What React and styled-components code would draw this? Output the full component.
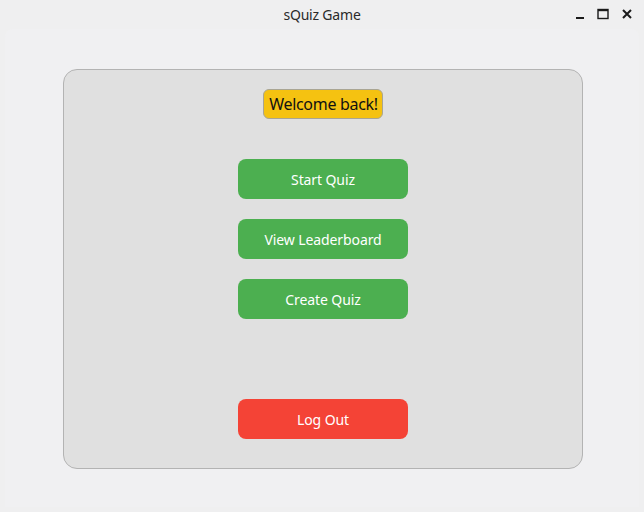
import React from "react";
import styled, { createGlobalStyle } from "styled-components";

const Global = createGlobalStyle`
  html, body { margin: 0; padding: 0; background: #efeff0; }
  body { font-family: "Noto Sans", "Open Sans", sans-serif; }
`;

const Window = styled.div`
  width: 644px;
  height: 512px;
  display: flex;
  flex-direction: column;
  background: #efeff0;
`;

const TitleBar = styled.div`
  height: 29px;
  position: relative;
  display: flex;
  align-items: center;
  justify-content: center;
  flex-shrink: 0;
`;

const Title = styled.div`
  font-size: 14px;
  color: #2a2a2a;
  letter-spacing: -0.2px;
`;

const Controls = styled.div`
  position: absolute;
  right: 11px;
  top: 8px;
  display: flex;
  gap: 12px;
  align-items: center;
`;

const Body = styled.div`
  flex: 1;
  margin: 0 5px 5px;
  border-radius: 8px 8px 0 0;
  background: #f0f0f2;
  display: flex;
  justify-content: flex-start;
  padding: 40px 0 0 58px;
`;

const Panel = styled.div`
  width: 520px;
  height: 400px;
  box-sizing: border-box;
  border: 1px solid #b3b3b3;
  border-radius: 14px;
  background: #e0e0e0;
  display: flex;
  flex-direction: column;
  align-items: center;
  padding: 19px 0 29px;
`;

const Welcome = styled.div`
  height: 28px;
  padding: 0 4px 0 5px;
  border: 1px solid #a9a593;
  border-radius: 6px;
  background: #f5c211;
  color: #111;
  font-size: 16px;
  letter-spacing: -0.3px;
  display: flex;
  align-items: center;
  margin-bottom: 40px;
`;

const Buttons = styled.div`
  display: flex;
  flex-direction: column;
  gap: 20px;
`;

const Spacer = styled.div`
  flex: 1;
`;

const Button = styled.button`
  width: 170px;
  height: 40px;
  border: none;
  border-radius: 8px;
  background: ${(p) => (p.$danger ? "#f44336" : "#4caf50")};
  color: #fff;
  font-family: inherit;
  font-size: 14px;
  letter-spacing: -0.1px;
  padding: 0;
  cursor: pointer;
`;

export default function App() {
  return (
    <>
      <Global />
      <Window>
        <TitleBar>
          <Title>sQuiz Game</Title>
          <Controls>
            <svg width="10" height="12" viewBox="0 0 10 12">
              <rect x="1" y="9" width="8" height="2" fill="#1a1a1a" />
            </svg>
            <svg width="12" height="12" viewBox="0 0 12 12">
              <rect x="1" y="1.5" width="10" height="9" fill="none" stroke="#1a1a1a" strokeWidth="1.4" />
              <rect x="1" y="1" width="10" height="2.2" fill="#1a1a1a" />
            </svg>
            <svg width="12" height="12" viewBox="0 0 12 12">
              <path d="M2 2 L10 10 M10 2 L2 10" stroke="#1a1a1a" strokeWidth="2" />
            </svg>
          </Controls>
        </TitleBar>
        <Body>
          <Panel>
            <Welcome>Welcome back!</Welcome>
            <Buttons>
              <Button>Start Quiz</Button>
              <Button>View Leaderboard</Button>
              <Button>Create Quiz</Button>
            </Buttons>
            <Spacer />
            <Button $danger>Log Out</Button>
          </Panel>
        </Body>
      </Window>
    </>
  );
}
